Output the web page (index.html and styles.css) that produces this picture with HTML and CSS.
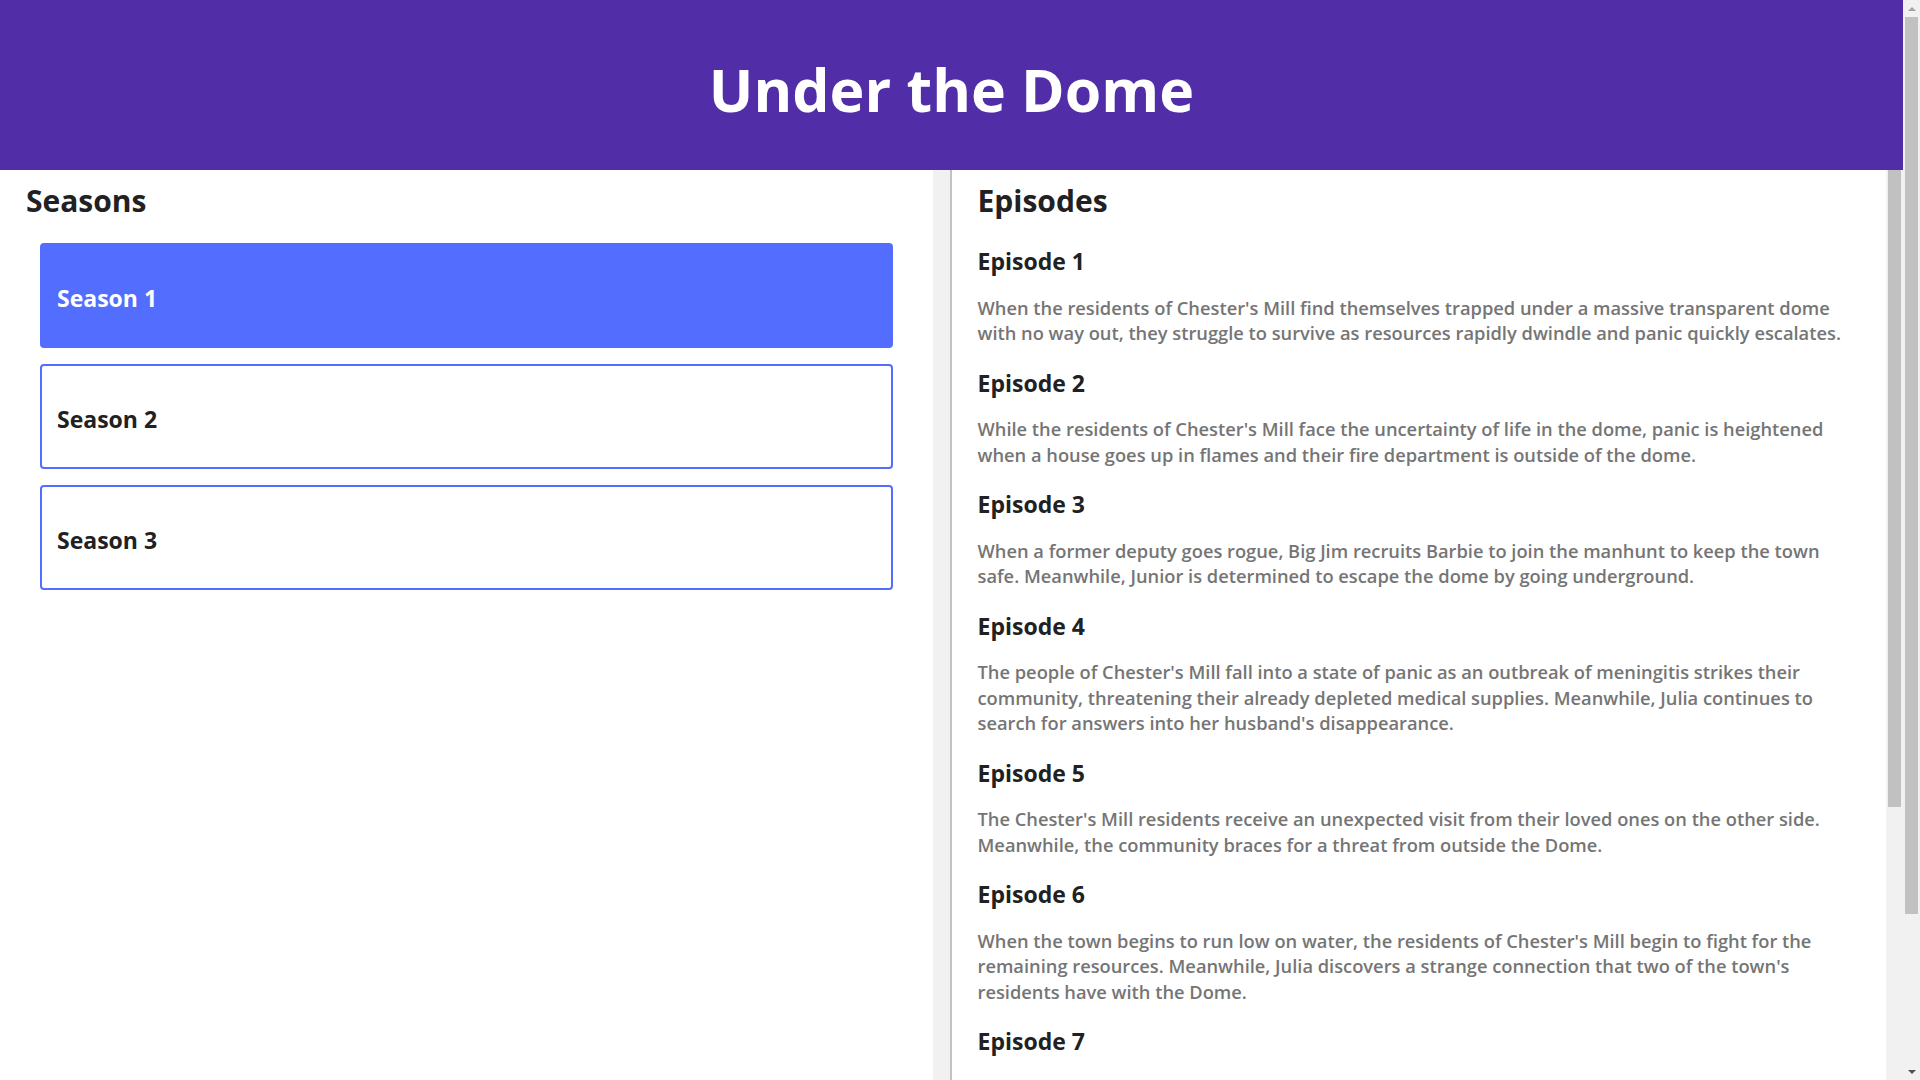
FILE: index.html
```html
<!DOCTYPE html>
<html lang="en">
<head>
<meta charset="utf-8">
<title>Under the Dome</title>
<link rel="stylesheet" href="styles.css">
</head>
<body>
<div class="app">
  <header class="top">
    <h1 class="title">Under the Dome</h1>
  </header>
  <main class="layout">
    <section class="panel seasons">
      <div class="panel-body">
        <h2 class="panel-title">Seasons</h2>
        <ul class="season-list">
          <li><button class="season active">Season 1</button></li>
          <li><button class="season">Season 2</button></li>
          <li><button class="season">Season 3</button></li>
        </ul>
      </div>
      <div class="track" aria-hidden="true"></div>
    </section>
    <section class="panel episodes">
      <div class="panel-body">
        <h2 class="panel-title">Episodes</h2>
        <article class="episode">
          <h3 class="episode-title">Episode 1</h3>
          <p class="episode-text">When the residents of Chester's Mill find themselves trapped under a massive transparent dome with no way out, they struggle to survive as resources rapidly dwindle and panic quickly escalates.</p>
        </article>
        <article class="episode">
          <h3 class="episode-title">Episode 2</h3>
          <p class="episode-text">While the residents of Chester's Mill face the uncertainty of life in the dome, panic is heightened when a house goes up in flames and their fire department is outside of the dome.</p>
        </article>
        <article class="episode">
          <h3 class="episode-title">Episode 3</h3>
          <p class="episode-text">When a former deputy goes rogue, Big Jim recruits Barbie to join the manhunt to keep the town safe. Meanwhile, Junior is determined to escape the dome by going underground.</p>
        </article>
        <article class="episode">
          <h3 class="episode-title">Episode 4</h3>
          <p class="episode-text">The people of Chester's Mill fall into a state of panic as an outbreak of meningitis strikes their community, threatening their already depleted medical supplies. Meanwhile, Julia continues to search for answers into her husband's disappearance.</p>
        </article>
        <article class="episode">
          <h3 class="episode-title">Episode 5</h3>
          <p class="episode-text">The Chester's Mill residents receive an unexpected visit from their loved ones on the other side. Meanwhile, the community braces for a threat from outside the Dome.</p>
        </article>
        <article class="episode">
          <h3 class="episode-title">Episode 6</h3>
          <p class="episode-text">When the town begins to run low on water, the residents of Chester's Mill begin to fight for the remaining resources. Meanwhile, Julia discovers a strange connection that two of the town's residents have with the Dome.</p>
        </article>
        <article class="episode">
          <h3 class="episode-title">Episode 7</h3>
          <p class="episode-text">Barbie and Julia must save the life of a young woman who goes into labor, while Big Jim and Junior search the woods for a missing townsperson. Meanwhile, Angie and Joe discover a mysterious connection that could unlock the Dome's secrets.</p>
        </article>
        <article class="episode">
          <h3 class="episode-title">Episode 8</h3>
          <p class="episode-text">Junior's obsession with Angie grows dangerous as the town faces a terrible storm, and Barbie questions Big Jim's true motives.</p>
        </article>
        <article class="episode">
          <h3 class="episode-title">Episode 9</h3>
          <p class="episode-text">When a mysterious egg is discovered at the center of the Dome, Joe, Norrie and Angie set out to protect it from the townspeople. Meanwhile, Julia uncovers evidence that connects Barbie to her husband's disappearance.</p>
        </article>
      </div>
      <div class="track" aria-hidden="true"><div class="thumb inner-thumb"></div></div>
    </section>
  </main>
</div>
<div class="page-scrollbar" aria-hidden="true">
  <span class="arrow-btn"><span class="arrow arrow-up"></span></span>
  <div class="page-track"><div class="thumb page-thumb"></div></div>
  <span class="arrow-btn"><span class="arrow arrow-down"></span></span>
</div>
</body>
</html>
```

FILE: styles.css
```css
* {
  box-sizing: border-box;
}

html,
body {
  margin: 0;
  padding: 0;
}

body {
  display: flex;
  height: 100vh;
  overflow: hidden;
  font-family: "Open Sans", "Noto Sans", "Liberation Sans", sans-serif;
  color: #212121;
  background: #ffffff;
}

.app {
  flex: 1 1 auto;
  min-width: 0;
  display: flex;
  flex-direction: column;
}

.top {
  flex: 0 0 170px;
  background: #512da8;
  padding: 53px 0 0;
  text-align: center;
}

.title {
  margin: 0;
  color: #ffffff;
  font-size: 59px;
  font-weight: 700;
  line-height: 72px;
}

.layout {
  flex: 1 1 auto;
  min-height: 0;
  display: flex;
}

.panel {
  display: flex;
  min-width: 0;
  overflow: hidden;
}

.panel-body {
  flex: 1 1 auto;
  min-width: 0;
  overflow: hidden;
  padding: 13px 26px 26px;
}

.track {
  flex: 0 0 17px;
  background: #f1f1f1;
  padding: 0 2px;
}

.thumb {
  background: #c1c1c1;
}

.inner-thumb {
  height: 637px;
}

.seasons {
  flex: 0 0 50%;
  border-right: 2px solid #c2c2c2;
}

.episodes {
  flex: 1 1 auto;
}

.panel-title {
  margin: 0;
  font-size: 30px;
  font-weight: 700;
  line-height: 36px;
  color: #212121;
}

.season-list {
  list-style: none;
  margin: 24px 0 0;
  padding: 0 14px;
}

.season-list li {
  margin: 0 0 16px;
}

.season {
  display: block;
  width: 100%;
  text-align: left;
  font-family: inherit;
  font-size: 23px;
  font-weight: 700;
  line-height: 30px;
  color: #212121;
  background: #ffffff;
  border: 2px solid #536dfe;
  border-radius: 4px;
  padding: 38px 15px 33px;
  cursor: pointer;
}

.season.active {
  background: #536dfe;
  color: #ffffff;
}

.episode-title {
  margin: 27px 0 0;
  font-size: 23px;
  font-weight: 700;
  line-height: 30px;
  color: #212121;
}

.episode + .episode .episode-title {
  margin-top: 21.6px;
}

.episode-text {
  margin: 18.5px 0 0;
  font-size: 18.3px;
  font-weight: 600;
  line-height: 25.7px;
  color: #757575;
}

.page-scrollbar {
  flex: 0 0 17px;
  display: flex;
  flex-direction: column;
  background: #f1f1f1;
}

.arrow-btn {
  flex: 0 0 17px;
  display: flex;
  align-items: center;
  justify-content: center;
}

.arrow {
  width: 0;
  height: 0;
  border-left: 4px solid transparent;
  border-right: 4px solid transparent;
}

.arrow-up {
  border-bottom: 4px solid #a3a3a3;
}

.arrow-down {
  border-top: 4px solid #505050;
}

.page-track {
  flex: 1 1 auto;
  padding: 0 2px;
}

.page-thumb {
  height: 897px;
}
```
